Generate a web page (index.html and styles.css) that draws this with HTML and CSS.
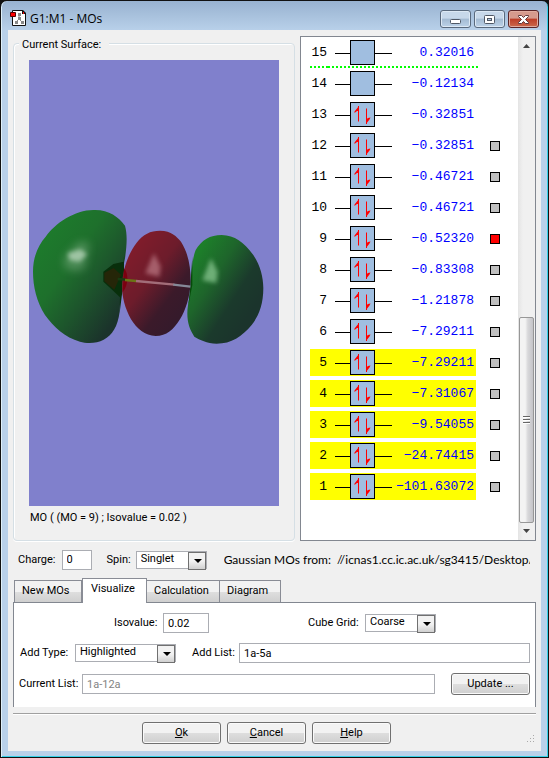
FILE: index.html
```html
<!DOCTYPE html>
<html lang="en">
<head>
<meta charset="utf-8">
<title>G1:M1 - MOs</title>
<link rel="stylesheet" href="styles.css">
</head>
<body>
<svg class="defs" aria-hidden="true">
  <symbol id="empty" viewBox="0 0 57 25">
    <path d="M0 13.500h57" stroke="#000"/>
    <rect x="15.500" y=".5" width="24" height="24" fill="#a0bee0" stroke="#000"/>
  </symbol>
  <symbol id="pair" viewBox="0 0 57 25">
    <use href="#empty" width="57" height="25"/>
    <path d="M23.500 19.500V4M31.500 6.500V22" stroke="#f00" fill="none"/>
    <path d="M24 4v5l-2 0-2.500 2 0-1.500zM31 22v-4.500l2-1.500 2.500-.5-1 2z" fill="#f00"/>
  </symbol>
</svg>
<div class="window">
  <header class="titlebar">
    <svg class="app-icon" width="16" height="16" viewBox="0 0 16 16">
      <path d="M2.500.5h10l3 3v12h-13z" fill="#fff" stroke="#111"/>
      <path d="M12 0h1l3 3v1h-4z" fill="#111"/><path d="M13 2h1v2h-1z" fill="#f00"/>
      <path d="M9 4v5l-4 4M9 9l4 4" fill="none" stroke="#888"/>
      <path d="M8 3h3v3H8zM8 7h3v3H8zM5 11h3v3H5zM11 11h3v3h-3z" fill="#888"/>
      <path d="M.5 2.500h5v4h-5z" fill="#f00" stroke="#500"/>
    </svg>
    <h1>G1:M1 - MOs</h1>
    <button class="caption" aria-label="Minimize"><svg width="13" height="11" viewBox="0 0 13 11"><rect x="1.500" y="5.500" width="10" height="4" rx="1" fill="#fff" stroke="#4f5866"/></svg></button>
    <button class="caption" aria-label="Maximize"><svg width="13" height="11" viewBox="0 0 13 11"><rect x="1.500" y="1.500" width="10" height="8" rx="1" fill="#fff" stroke="#4f5866"/><rect x="4.500" y="4.500" width="4" height="2" fill="#b5cae2" stroke="#4f5866"/></svg></button>
    <button class="caption close" aria-label="Close"><svg width="13" height="11" viewBox="0 0 13 11"><path d="M1.500 1.500h3l2 2 2-2h3v1l-3 3 3 3v1h-3l-2-2-2 2h-3v-1l3-3-3-3z" fill="#fff" stroke="#5e3a3e"/></svg></button>
  </header>
  <main class="client">
    <div class="upper">
      <fieldset class="surface">
        <legend>Current Surface:</legend>
        <svg class="view" viewBox="0 0 250 446" preserveAspectRatio="xMidYMid slice" role="img" aria-label="Orbital surface">
          <defs>
            <linearGradient id="gl" x1=".15" y1=".15" x2=".85" y2=".85"><stop offset="0" stop-color="#1d7b2c"/><stop offset=".35" stop-color="#1e702c"/><stop offset=".65" stop-color="#1d552c"/><stop offset="1" stop-color="#1b332b"/></linearGradient>
            <linearGradient id="gm" x1=".2" y1=".15" x2=".8" y2=".85"><stop offset="0" stop-color="#7f1c2b"/><stop offset=".4" stop-color="#6d1c2b"/><stop offset=".75" stop-color="#3b1a2a"/><stop offset="1" stop-color="#351a2b"/></linearGradient>
            <linearGradient id="gr" x1=".15" y1=".15" x2=".8" y2=".75"><stop offset="0" stop-color="#1d7e2a"/><stop offset=".35" stop-color="#1e652b"/><stop offset=".72" stop-color="#1b3a2c"/><stop offset="1" stop-color="#1b342c"/></linearGradient>
            <filter id="soft" x="-100%" y="-100%" width="300%" height="300%"><feGaussianBlur stdDeviation="12"/></filter>
            <filter id="fine" x="-100%" y="-100%" width="300%" height="300%"><feGaussianBlur stdDeviation="7"/></filter>
          </defs>
          <rect x="-500" y="-500" width="1250" height="1446" fill="#8080cc"/>
          <g transform="translate(-4 130) scale(.33333)">
            <path d="M24 245C24 200 40 165 62 140C90 100 150 60 205 60C250 58 280 80 300 107C308 135 305 170 300 205C292 240 287 300 284 365C278 410 262 435 236 449C215 461 185 461 165 455C120 443 85 410 60 375C35 335 24 290 24 245z" fill="url(#gl)"/>
            <path d="M118 200l45-45 30 5-14 75-25 8-36-10z" fill="#7fae85" opacity=".5" filter="url(#soft)"/>
            <path d="M128 190l38-12 20 15-22 22-30-5z" fill="#b2d2b6" opacity=".8" filter="url(#fine)"/>
            <path d="M298 185L296 215L265 222L235 245V275L262 300L285 322L284 368L290 320L297 270V215z" fill="#082f0b"/>
            <path d="M238 248l28-14 22 20-20 45-30-25z" fill="#252608"/>
            <path d="M405 122C440 122 455 140 468 155C490 190 497 230 497 275C495 320 482 360 465 388C445 420 425 438 392 438C360 438 335 415 318 388C300 355 291 320 291 290C292 240 310 190 335 158C355 133 375 122 405 122z" fill="url(#gm)"/>
            <path d="M297 235c14 15 14 50-4 72z" fill="#7c0010"/>
            <path d="M387 190l20 40-4 30-42-10z" fill="#b87480" opacity=".75" filter="url(#fine)"/>
            <path d="M590 135C630 137 655 155 685 195C705 225 715 260 715 295C715 345 700 380 680 405C650 440 620 461 575 461C545 460 525 450 508 440C495 420 487 400 487 370C488 340 495 320 498 290C500 250 500 210 512 180C530 150 555 135 590 135z" fill="url(#gr)"/>
            <path d="M502 200v85l-12 62 6-58z" fill="#064b09"/>
            <path d="M558 205l20 40-4 34-42-8z" fill="#7cbb84" opacity=".85" filter="url(#fine)"/>
            <path d="M278 267l25 2" stroke="#173c12" stroke-width="7"/>
            <path d="M300 270l34 3" stroke="#6a7415" stroke-width="7"/>
            <path d="M333 273l115 11" stroke="#a26d79" stroke-width="7"/>
            <path d="M445 284l51 6" stroke="#858998" stroke-width="7"/>
          </g>
        </svg>
        <p class="caption-text">MO ( (MO = 9) ; Isovalue = 0.02 )</p>
      </fieldset>
      <section class="levels" aria-label="Orbital energies">
        <table>
          <tbody>
            <tr class="gap"><td>15</td><td><svg width="57" height="25"><use href="#empty"/></svg></td><td>0.32016</td><td></td></tr>
            <tr><td>14</td><td><svg width="57" height="25"><use href="#empty"/></svg></td><td>−0.12134</td><td></td></tr>
            <tr><td>13</td><td><svg width="57" height="25"><use href="#pair"/></svg></td><td>−0.32851</td><td></td></tr>
            <tr><td>12</td><td><svg width="57" height="25"><use href="#pair"/></svg></td><td>−0.32851</td><td><input type="checkbox" aria-label="MO 12"></td></tr>
            <tr><td>11</td><td><svg width="57" height="25"><use href="#pair"/></svg></td><td>−0.46721</td><td><input type="checkbox" aria-label="MO 11"></td></tr>
            <tr><td>10</td><td><svg width="57" height="25"><use href="#pair"/></svg></td><td>−0.46721</td><td><input type="checkbox" aria-label="MO 10"></td></tr>
            <tr><td>9</td><td><svg width="57" height="25"><use href="#pair"/></svg></td><td>−0.52320</td><td><input type="checkbox" aria-label="MO 9" checked></td></tr>
            <tr><td>8</td><td><svg width="57" height="25"><use href="#pair"/></svg></td><td>−0.83308</td><td><input type="checkbox" aria-label="MO 8"></td></tr>
            <tr><td>7</td><td><svg width="57" height="25"><use href="#pair"/></svg></td><td>−1.21878</td><td><input type="checkbox" aria-label="MO 7"></td></tr>
            <tr><td>6</td><td><svg width="57" height="25"><use href="#pair"/></svg></td><td>−7.29211</td><td><input type="checkbox" aria-label="MO 6"></td></tr>
            <tr class="picked"><td>5</td><td><svg width="57" height="25"><use href="#pair"/></svg></td><td>−7.29211</td><td><input type="checkbox" aria-label="MO 5"></td></tr>
            <tr class="picked"><td>4</td><td><svg width="57" height="25"><use href="#pair"/></svg></td><td>−7.31067</td><td><input type="checkbox" aria-label="MO 4"></td></tr>
            <tr class="picked"><td>3</td><td><svg width="57" height="25"><use href="#pair"/></svg></td><td>−9.54055</td><td><input type="checkbox" aria-label="MO 3"></td></tr>
            <tr class="picked"><td>2</td><td><svg width="57" height="25"><use href="#pair"/></svg></td><td>−24.74415</td><td><input type="checkbox" aria-label="MO 2"></td></tr>
            <tr class="picked"><td>1</td><td><svg width="57" height="25"><use href="#pair"/></svg></td><td>−101.63072</td><td><input type="checkbox" aria-label="MO 1"></td></tr>
          </tbody>
        </table>
        <div class="scrollbar">
          <svg class="arrow" width="17" height="17" viewBox="0 0 17 17"><path d="M5 11l3.500-4 3.500 4z" fill="#444"/></svg>
          <div class="track"></div>
          <div class="thumb"><svg width="7" height="9" viewBox="0 0 7 9"><path d="M0 .5h7M0 3.500h7M0 6.500h7" stroke="#666"/><path d="M0 1.500h7M0 4.500h7M0 7.500h7" stroke="#fff"/></svg></div>
          <svg class="arrow" width="17" height="17" viewBox="0 0 17 17"><path d="M5 6h7l-3.500 4z" fill="#444"/></svg>
        </div>
      </section>
    </div>
    <div class="settings">
      <label for="charge">Charge:</label>
      <input class="field tiny" id="charge" type="text" value="0">
      <label class="spin" for="spin">Spin:</label>
      <span class="select"><select id="spin"><option>Singlet</option></select></span>
      <p class="source">Gaussian MOs from:&nbsp; //icnas1.cc.ic.ac.uk/sg3415/Desktop/</p>
    </div>
    <div class="tabs" role="tablist">
      <button class="tab t1" role="tab">New MOs</button>
      <button class="tab t2 active" role="tab" aria-selected="true">Visualize</button>
      <button class="tab t3" role="tab">Calculation</button>
      <button class="tab t4" role="tab">Diagram</button>
    </div>
    <section class="panel">
      <div class="row first">
        <label for="iso">Isovalue:</label>
        <input class="field small" id="iso" type="text" value="0.02">
        <label class="grid-label" for="grid">Cube Grid:</label>
        <span class="select"><select id="grid"><option>Coarse</option></select></span>
      </div>
      <div class="row">
        <label class="type-label" for="type">Add Type:</label>
        <span class="select wide"><select id="type"><option>Highlighted</option></select></span>
        <label class="list-label" for="list">Add List:</label>
        <input class="field grow" id="list" type="text" value="1a-5a">
      </div>
      <div class="row">
        <label class="current-label" for="current">Current List:</label>
        <input class="field grow" id="current" type="text" value="1a-12a" disabled>
        <button class="button update">Update ...</button>
      </div>
    </section>
    <footer class="actions">
      <button class="button"><u>O</u>k</button>
      <button class="button"><u>C</u>ancel</button>
      <button class="button"><u>H</u>elp</button>
      <svg class="grip" width="9" height="9" viewBox="0 0 9 9"><path d="M7 1h1v1H7zM4 4h1v1H4zM7 4h1v1H7zM1 7h1v1H1zM4 7h1v1H4zM7 7h1v1H7z" fill="#aaa"/></svg>
    </footer>
  </main>
</div>
</body>
</html>
```
FILE: styles.css
```css
* { box-sizing: border-box; }
body { margin: 0; background: #111; color: #000; font: 11px/14px Roboto, "Liberation Sans", sans-serif; }
button, input, select { font: inherit; color: inherit; margin: 0; }
p, h1 { margin: 0; }
.defs { position: absolute; width: 0; height: 0; }

.window {
  min-height: 100vh;
  display: flex;
  flex-direction: column;
  padding: 0 6px 6px;
  border: 1px solid #111;
  border-radius: 7px 7px 0 0;
  background: linear-gradient(#98b2d0, #b9d1ea 30px);
  box-shadow: inset 1px 0 #dff0fa, inset -1px -1px #35d0e8;
}
.titlebar { display: flex; gap: 3px; height: 29px; padding: 8px 3px 0 3px; }
.app-icon { flex: none; margin-top: 1px; }
h1 { flex: 1; font: 12px/20px "Open Sans", sans-serif; padding-left: 1px; }
.caption {
  display: grid;
  place-items: center;
  width: 31px;
  height: 18px;
  margin-top: 1px;
  padding: 0;
  border: 1px solid #59697d;
  border-radius: 3px;
  background: linear-gradient(#c7d8ea 45%, #a3bad2 50%, #bcd2e8);
  box-shadow: inset 0 0 0 1px #dce8f4;
}
.close { border-color: #5b2528; background: linear-gradient(#d69a8d 45%, #bd3d27 50%, #cb6a4d); box-shadow: inset 0 0 0 1px #e0aca0; }

.client { flex: 1; margin: 0 1px; padding: 6px 5px 0; background: #f0f0f0; }
.upper { display: flex; gap: 5px; height: 505px; }
.surface { position: relative; flex: 1; min-width: 0; margin: 7px 0 0; padding: 16px 15px 0; border: 1px solid #d5dfe5; border-radius: 4px; box-shadow: inset 1px 1px #fff, 0 1px #fff; }
.surface legend { position: absolute; top: -6px; left: 5px; padding: 0 8px 0 3px; background: #f0f0f0; }
.view { display: block; width: 100%; height: 446px; }
.caption-text { padding: 5px 1px; }

.levels { display: flex; flex: none; width: 236px; border: 1px solid #828790; background: #fff; }
.levels table { border-collapse: separate; border-spacing: 0; margin: 0 auto 0 9px; height: 465px; font: 13px/25px "Liberation Mono", monospace; }
.levels td { height: 31px; padding: 0; border: solid transparent; border-width: 2px 0; background-clip: padding-box; text-align: right; }
.levels td:nth-child(1) { width: 18px; padding-right: 1px; }
.levels td:nth-child(2) { width: 64px; }
.levels td:nth-child(3) { width: 84px; padding-right: 2px; color: #00f; }
.levels td:nth-child(4) { width: 24px; }
.levels td svg { display: block; margin-left: auto; }
.picked td:not(:last-child) { background-color: #ff0; }
.gap td { background: repeating-linear-gradient(90deg, #0f0 0 2px, transparent 2px 4px) 0 100% / 100% 2px no-repeat border-box; }
.gap td:last-child { background-size: 4px 2px; }
.levels input { display: block; appearance: none; width: 10px; height: 10px; margin-left: auto; border: 1px solid #000; background: #c0c0c0; }
.levels input:checked { background: #f00; }
.scrollbar { display: flex; flex-direction: column; width: 17px; background: linear-gradient(90deg, #e4e4e4, #f0f0f0 30%); }
.arrow { flex: none; }
.track { flex: 264; }
.thumb { flex: 204; display: grid; place-items: center; margin: 0 1px; border: 1px solid #979797; border-radius: 2px; background: linear-gradient(90deg, #f3f3f3 40%, #d8d8da 60%, #c4c4c8); }

.settings { display: flex; align-items: center; height: 37px; padding-left: 5px; }
.field { height: 20px; min-width: 0; padding: 0 4px; border: 1px solid #abadb3; background: #fff; }
.field:disabled { color: #838383; }
.tiny { width: 30px; margin-left: 6px; }
.spin { margin: 0 5px 0 15px; }
.select { position: relative; flex: none; width: 71px; height: 18px; }
.select select { display: block; appearance: none; width: 100%; height: 100%; padding: 0 20px 2px 4px; border: 1px solid #abadb3; border-radius: 0; background: #fff; }
.select::before { content: ""; position: absolute; top: 1px; right: 1px; width: 16px; height: 16px; border: 1px solid #707070; background: linear-gradient(#f2f2f2 50%, #d0d0d0); pointer-events: none; }
.select::after { content: ""; position: absolute; top: 8px; right: 5px; border: 4px solid transparent; border-top-color: #000; border-bottom: 0; pointer-events: none; }
.source { flex: 1; margin: 0 6px 0 17px; overflow: hidden; white-space: nowrap; font: 12px/18px Lato, sans-serif; }

.tabs { display: flex; align-items: flex-end; height: 24px; padding-left: 1px; }
.tab { height: 22px; padding: 0 0 2px 7px; text-align: left; border: 1px solid #898c95; border-bottom: 0; border-left-width: 0; background: linear-gradient(#f2f2f2 50%, #dfdfdf 50%, #cfcfcf); }
.t1 { width: 68px; border-left-width: 1px; }
.t2 { width: 65px; }
.t3 { width: 73px; }
.t4 { width: 61px; }
.tab.active { position: relative; height: 25px; margin-bottom: -1px; padding: 0 0 4px 8px; border-left-width: 1px; background: #fff; }
.panel { display: flex; flex-direction: column; gap: 9px; height: 105px; padding: 10px 5px 0; border: 1px solid #828790; border-bottom: 0; background: #fff; }
.row { display: flex; align-items: center; height: 22px; }
.row.first { padding-left: 95px; height: 20px; }
.row.first label:first-child { width: 43px; }
.small { width: 46px; margin-left: 6px; }
.grid-label { width: 57px; margin-left: 99px; }
.type-label { width: 56px; padding-left: 1px; }
.wide { width: 101px; }
.list-label { width: 47px; margin-left: 16px; }
.current-label { width: 63px; }
.grow { flex: 1; }
.button { width: 79px; height: 22px; padding: 0 0 1px; border: 1px solid #707070; border-radius: 3px; background: linear-gradient(#f2f2f2 48%, #dedede 50%, #cfcfcf); box-shadow: inset 0 0 0 1px #fafafa; }
.update { margin-left: 16px; }
.actions { position: relative; display: flex; justify-content: center; gap: 6px; height: 37px; margin-top: 6px; padding: 8px 16px 0 0; border-top: 1px solid #a0a0a0; box-shadow: inset 0 1px #fff; }
.grip { position: absolute; right: 1px; bottom: 7px; }
```
